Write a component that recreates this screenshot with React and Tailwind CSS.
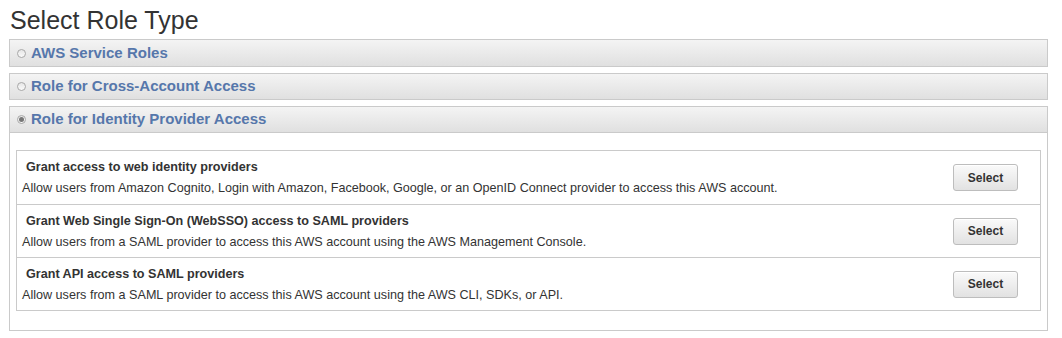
import React from "react";

const options = [
  {
    title: "Grant access to web identity providers",
    text: "Allow users from Amazon Cognito, Login with Amazon, Facebook, Google, or an OpenID Connect provider to access this AWS account.",
  },
  {
    title: "Grant Web Single Sign-On (WebSSO) access to SAML providers",
    text: "Allow users from a SAML provider to access this AWS account using the AWS Management Console.",
  },
  {
    title: "Grant API access to SAML providers",
    text: "Allow users from a SAML provider to access this AWS account using the AWS CLI, SDKs, or API.",
  },
];

const Radio = ({ checked }) => (
  <span className="w-[9px] h-[9px] rounded-full border border-[#a8a8a8] bg-gradient-to-b from-[#e6e6e6] to-[#fafafa] flex items-center justify-center mr-[5px] shrink-0">
    {checked && <span className="w-[5px] h-[5px] rounded-full bg-[#777]" />}
  </span>
);

const Header = ({ label, checked, h }) => (
  <div
    className={`flex items-center pl-[7px] border border-[#cacaca] bg-gradient-to-b from-[#f4f4f4] to-[#e0e0e0] ${h}`}
  >
    <Radio checked={checked} />
    <span className="text-[15px] font-bold text-[#5677ab]">{label}</span>
  </div>
);

export default function App() {
  return (
    <div className="w-[1062px] h-[338px] bg-white pl-[9px] font-['Liberation_Sans',Arial,sans-serif]">
      <h1 className="pt-[5px] h-[39px] text-[25px] leading-[30px] text-[#333] pl-px">Select Role Type</h1>

      <div className="w-[1039px] flex flex-col">
        <Header label="AWS Service Roles" h="h-[28px]" />
        <div className="h-[6px]" />
        <Header label="Role for Cross-Account Access" h="h-[27px]" />
        <div className="h-[6px]" />
        <Header label="Role for Identity Provider Access" checked h="h-[27px]" />

        <div className="border border-t-0 border-[#cacaca] pt-[17px] pb-[19px] px-[6px]">
          <div className="border border-[#cacaca]">
            {options.map((o, i) => (
              <div
                key={o.title}
                className={`h-[53px] flex items-center justify-between pr-[22px] ${i > 0 ? "border-t border-[#cacaca]" : ""}`}
              >
                <div className="pl-[5px] text-[#333]">
                  <div className="pl-[4px] text-[12.6px] font-bold leading-[16px]">{o.title}</div>
                  <div className="text-[12.6px] leading-[16px] mt-[5px]">{o.text}</div>
                </div>
                <button className="w-[65px] h-[27px] rounded-[3px] border border-[#bdbdbd] bg-gradient-to-b from-[#fafafa] to-[#e2e2e2] text-[12px] font-bold text-[#333] shadow-[inset_0_1px_0_#fff]">
                  Select
                </button>
              </div>
            ))}
          </div>
        </div>
      </div>
    </div>
  );
}
